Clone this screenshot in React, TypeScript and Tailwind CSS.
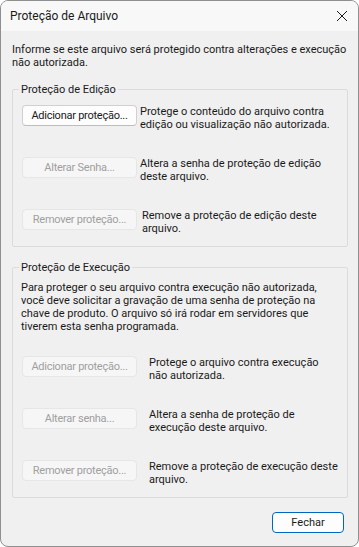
import React from 'react';

interface RowProps {
  label: string;
  lines: [string, string];
  enabled?: boolean;
  gap: string;
}

const ActionRow: React.FC<RowProps> = ({ label, lines, enabled = false, gap }) => {
  return (
    <div className="flex items-start">
      <button
        type="button"
        disabled={!enabled}
        className={`w-[115px] h-[21px] shrink-0 rounded-[4px] border text-[11px] leading-[13px] tracking-[-0.25px] whitespace-nowrap overflow-hidden ${
          enabled
            ? 'bg-[#fdfdfd] border-[#d0d0d0] border-b-[#bdbdbd] text-[#1a1a1a]'
            : 'bg-[#f6f6f6] border-[#e6e6e6] text-[#9f9f9f]'
        }`}
      >
        {label}
      </button>
      <p className={`${gap} text-[11px] leading-[13px] text-[#1a1a1a] whitespace-nowrap`}>
        {lines[0]}
        <br />
        {lines[1]}
      </p>
    </div>
  );
};

const GroupBox: React.FC<{ title: string; className?: string; children: React.ReactNode }> = ({
  title,
  className = '',
  children,
}) => {
  return (
    <fieldset className={`border border-[#dcdcdc] rounded-[2px] p-0 m-0 min-w-0 ${className}`}>
      <legend className="ml-[6px] px-[2px] text-[11px] leading-[13px] text-[#1a1a1a]">{title}</legend>
      {children}
    </fieldset>
  );
};

export default function App() {
  return (
    <div
      className="w-[359px] h-[547px] flex flex-col border border-[#8f8f8f] rounded-[8px] overflow-hidden bg-[#f0f0f0] text-[#1a1a1a]"
      style={{ fontFamily: 'Roboto, "Liberation Sans", sans-serif' }}
    >
      {/* title bar */}
      <div className="h-[30px] shrink-0 flex items-center justify-between bg-[#f8f8f8] pl-[9px] pr-[9px]">
        <span className="text-[12px] leading-[14px]">Proteção de Arquivo</span>
        <svg width="12" height="12" viewBox="0 0 12 12" className="mr-[1px]">
          <path d="M1 1 L11 11 M11 1 L1 11" stroke="#1c1c1c" strokeWidth="1" fill="none" />
        </svg>
      </div>

      {/* body */}
      <div className="flex-1 flex flex-col pt-[12px] pl-[11px] pr-[10px]">
        <p className="text-[11px] leading-[13px] whitespace-nowrap">
          Informe se este arquivo será protegido contra alterações e execução
          <br />
          não autorizada.
        </p>

        <GroupBox title="Proteção de Edição" className="mt-[14px]">
          <div className="flex flex-col gap-[26px] pt-[9px] pb-[11px] pl-[9px]">
            <ActionRow
              label="Adicionar proteção..."
              enabled
              gap="ml-[3px]"
              lines={['Protege o conteúdo do arquivo contra', 'edição ou visualização não autorizada.']}
            />
            <ActionRow
              label="Alterar Senha..."
              gap="ml-[3px]"
              lines={['Altera a senha de proteção de edição', 'deste arquivo.']}
            />
            <ActionRow
              label="Remover proteção..."
              gap="ml-[5px]"
              lines={['Remove a proteção de edição deste', 'arquivo.']}
            />
          </div>
        </GroupBox>

        <GroupBox title="Proteção de Execução" className="mt-[14px]">
          <div className="flex flex-col pt-[7px] pb-[11px] pl-[8px]">
            <p className="text-[11px] leading-[13px] whitespace-nowrap">
              Para proteger o seu arquivo contra execução não autorizada,
              <br />
              você deve solicitar a gravação de uma senha de proteção na
              <br />
              chave de produto. O arquivo só irá rodar em servidores que
              <br />
              tiverem esta senha programada.
            </p>
            <div className="flex flex-col gap-[26px] mt-[23px] pl-[1px]">
              <ActionRow
                label="Adicionar proteção..."
                gap="ml-[12px]"
                lines={['Protege o arquivo contra execução', 'não autorizada.']}
              />
              <ActionRow
                label="Alterar senha..."
                gap="ml-[12px]"
                lines={['Altera a senha de proteção de', 'execução deste arquivo.']}
              />
              <ActionRow
                label="Remover proteção..."
                gap="ml-[12px]"
                lines={['Remove a proteção de execução deste', 'arquivo.']}
              />
            </div>
          </div>
        </GroupBox>

        <div className="flex justify-end mt-[14px] pr-[4px]">
          <button
            type="button"
            className="w-[72px] h-[21px] rounded-[4px] border border-[#0067c0] bg-[#fdfdfd] text-[11px] leading-[13px] text-[#1a1a1a]"
          >
            Fechar
          </button>
        </div>
      </div>
    </div>
  );
}
